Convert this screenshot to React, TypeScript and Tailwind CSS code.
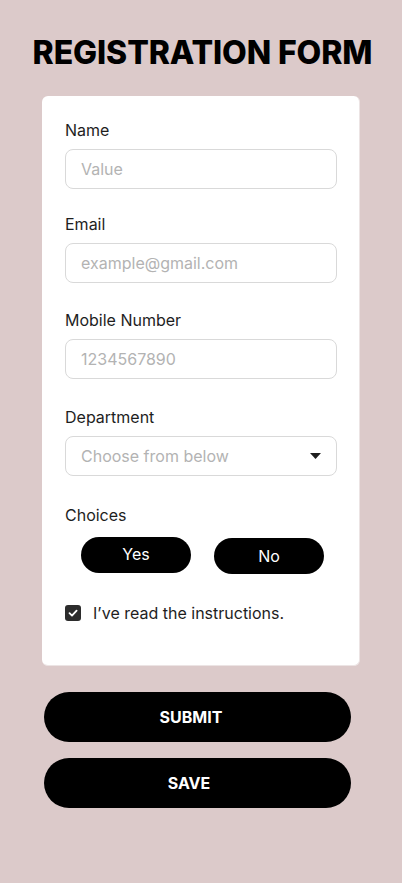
import React from "react";

const font = { fontFamily: "Inter, 'Noto Sans', sans-serif" };

function Field({ label, placeholder, className = "" }: { label: string; placeholder: string; className?: string }) {
  return (
    <div className={"flex flex-col " + className}>
      <div className="text-[16px] leading-[22px] text-[#1e1e1e]">{label}</div>
      <div className="mt-[8px] flex h-[40px] w-[272px] items-center rounded-[8px] border border-[#d9d9d9] bg-white px-[15px] text-[16px] text-[#b3b3b3]">
        {placeholder}
      </div>
    </div>
  );
}

export default function App() {
  return (
    <div className="min-h-screen w-full bg-[#dccaca]" style={font}>
      <div className="flex flex-col">
        <h1 className="pl-[3px] pt-[34px] text-center text-[32px] font-extrabold leading-[38px] tracking-[-0.1px] text-black">
          REGISTRATION FORM
        </h1>
        <div className="ml-[42px] mt-[24px] w-[318px] rounded-[6px] border-b border-r border-[#ece4e4] bg-white px-[23px] pb-[41px] pt-[23px]">
          <Field label="Name" placeholder="Value" />
          <Field label="Email" placeholder="example@gmail.com" className="mt-[24px]" />
          <Field label="Mobile Number" placeholder="1234567890" className="mt-[26px]" />
          <div className="mt-[27px] flex flex-col">
            <div className="text-[16px] leading-[22px] text-[#1e1e1e]">Department</div>
            <div className="mt-[8px] flex h-[40px] w-[272px] items-center justify-between rounded-[8px] border border-[#d9d9d9] bg-white pl-[15px] pr-[15px] text-[16px] text-[#b3b3b3]">
              <span>Choose from below</span>
              <svg width="11" height="6" viewBox="0 0 11 6">
                <path d="M0 0 L11 0 L5.5 6 Z" fill="#1e1e1e" />
              </svg>
            </div>
          </div>
          <div className="mt-[28px] text-[16px] leading-[22px] text-[#1e1e1e]">Choices</div>
          <div className="mt-[11px] flex items-start pl-[16px]">
            <div className="flex h-[36px] w-[110px] items-center justify-center rounded-full bg-black pb-[2px] text-[16px] text-white">
              Yes
            </div>
            <div className="ml-[23px] mt-[1px] flex h-[36px] w-[110px] items-center justify-center rounded-full bg-black text-[16px] text-white">
              No
            </div>
          </div>
          <div className="mt-[28px] flex items-center">
            <div className="flex h-[16px] w-[16px] items-center justify-center rounded-[3px] bg-[#2c2c2c]">
              <svg width="12" height="12" viewBox="0 0 12 12" fill="none">
                <path d="M2.5 6.2 L5 8.6 L9.6 3.6" stroke="white" strokeWidth="1.8" strokeLinecap="round" strokeLinejoin="round" />
              </svg>
            </div>
            <span className="ml-[12px] text-[16px] leading-[22px] text-[#1e1e1e]">I’ve read the instructions.</span>
          </div>
        </div>
        <button className="ml-[44px] mt-[26px] flex h-[50px] w-[307px] items-center justify-center rounded-full bg-black pr-[13px] text-[16px] font-bold text-white">
          SUBMIT
        </button>
        <button className="ml-[44px] mt-[16px] flex h-[50px] w-[307px] items-center justify-center rounded-full bg-black pr-[17px] text-[16px] font-bold text-white">
          SAVE
        </button>
      </div>
    </div>
  );
}
